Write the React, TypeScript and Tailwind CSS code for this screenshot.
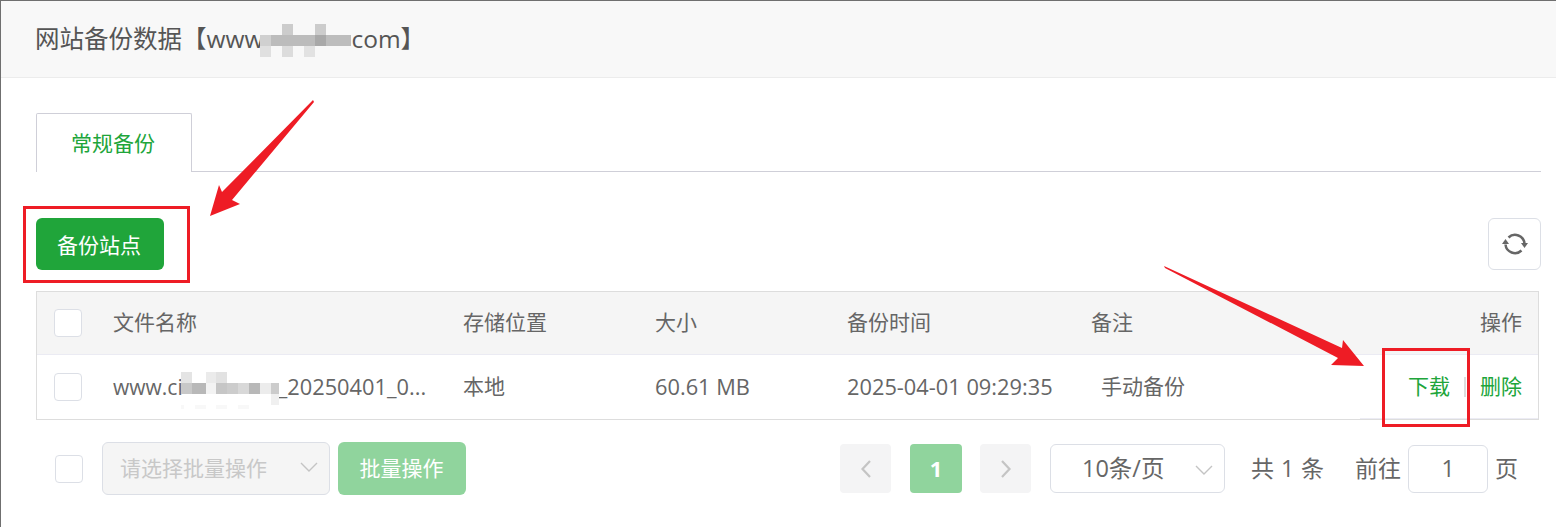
const font = { fontFamily: '"Open Sans","Noto Sans CJK SC",sans-serif' };

function Check({ className = "" }: { className?: string }) {
  return <span className={`block w-[28px] h-[28px] bg-white border border-[#dcdfe6] rounded-[4px] shrink-0 ${className}`} />;
}

function Mosaic({ cells, w, h, className = "" }: { cells: [number, number, number, number, string][]; w: number; h: number; className?: string }) {
  return (
    <svg width={w} height={h} viewBox={`0 0 ${w} ${h}`} className={`absolute ${className}`}>
      {cells.map(([x, y, cw, ch, c], i) => (
        <rect key={i} x={x} y={y} width={cw} height={ch} fill={c} />
      ))}
    </svg>
  );
}

function Chevron({ d = "M3 5l8 8 8-8", className = "" }: { d?: string; className?: string }) {
  return (
    <svg width="22" height="18" viewBox="0 0 22 18" fill="none" className={className}>
      <path d={d} stroke="currentColor" strokeWidth="1.4" />
    </svg>
  );
}

const grid = "grid grid-cols-[76px_350px_192px_192px_244px_1fr] items-center";

export default function App() {
  return (
    <div style={font} className="relative w-[1556px] h-[527px] overflow-hidden bg-white border-l border-t border-[#6f6f6f] text-[21px] text-[#666666]">
      <div className="h-[77px] bg-[#f8f8f8] border-b border-[#ececec] flex items-center pl-[34px] text-[24.5px] text-[#555555] relative">
        <span className="whitespace-nowrap leading-none flex items-center">
          网站备份数据【www<span className="w-[88px] inline-block" />com】
        </span>
        <Mosaic
          w={91}
          h={33}
          className="left-[259px] top-[23px]"
          cells={[
            [22, 0, 11, 11, "#cccccc"],
            [55, 0, 11, 11, "#cccccc"],
            [0, 11, 11, 11, "#d0d0d0"],
            [11, 11, 44, 11, "#bcbcbc"],
            [55, 11, 11, 11, "#a9a9a9"],
            [66, 11, 25, 11, "#bdbdbd"],
            [0, 22, 11, 11, "#e0e0e0"],
            [22, 22, 11, 11, "#dcdcdc"],
            [44, 22, 11, 11, "#e2e2e2"],
          ]}
        />
      </div>

      <div className="pl-[35px] pr-[15px] pt-[35px]">
        <div className="h-[59px] border-b border-[#cfcfd8]">
          <div className="w-[156px] h-[59px] bg-white border border-b-0 border-[#cfcfd8] rounded-t-[2px] text-[#20a53a] flex items-center justify-center pt-[2px] pr-[2px]">
            常规备份
          </div>
        </div>

        <div className="flex justify-between items-start mt-[46px]">
          <button className="w-[128px] h-[52px] bg-[#20a53a] text-white rounded-[6px] leading-none pt-[2px] pr-[2px]">备份站点</button>
          <button className="w-[53px] h-[52px] bg-white border border-[#dcdfe6] rounded-[6px] flex items-center justify-center text-[#666666]">
            <svg width="26" height="26" viewBox="0 0 26 26" fill="none">
              <path d="M6.500 6.500A9.500 9.500 0 0 1 22.500 12.500" stroke="currentColor" strokeWidth="2.500" />
              <path d="M19.500 19.500A9.500 9.500 0 0 1 3.500 13.500" stroke="currentColor" strokeWidth="2.500" />
              <path d="M19 12h7l-3.500 5z" fill="currentColor" />
              <path d="M0 13h7L3.500 8z" fill="currentColor" />
            </svg>
          </button>
        </div>

        <div className="relative mt-[21px] w-[1503px] border border-[#dddddd]">
          <div className={`${grid} h-[63px] bg-[#f5f5f5] border-b border-[#ebebf3]`}>
            <Check className="ml-[17px]" />
            <div>文件名称</div>
            <div>存储位置</div>
            <div>大小</div>
            <div>备份时间</div>
            <div className="flex justify-between pr-[16px]">
              <span>备注</span>
              <span>操作</span>
            </div>
          </div>
          <div className={`${grid} h-[64px] bg-white`}>
            <Check className="ml-[17px]" />
            <div className="relative whitespace-nowrap">
              www.ci<span className="inline-block w-[95px]" /><span className="text-[21.8px]">_20250401_0...</span>
              <Mosaic
                w={98}
                h={38}
                className="left-[68px] top-[1px]"
                cells={[
                  [0, 0, 11, 11, "#e4e4e4"],
                  [25, 0, 10, 11, "#ebebeb"],
                  [35, 0, 11, 11, "#e2e2e2"],
                  [0, 11, 11, 11, "#c8c8c8"],
                  [11, 11, 14, 11, "#b8b8b8"],
                  [25, 11, 10, 11, "#f3f3f3"],
                  [35, 11, 11, 11, "#c6c6c6"],
                  [46, 11, 11, 11, "#cccccc"],
                  [57, 11, 11, 11, "#d8d8d8"],
                  [68, 11, 11, 11, "#b8b8b8"],
                  [79, 11, 11, 11, "#ececec"],
                  [90, 11, 8, 11, "#cccccc"],
                  [90, 22, 8, 11, "#f0f0f0"],
                  [0, 33, 3, 4, "#f8f8f8"],
                  [14, 33, 11, 4, "#f8f8f8"],
                  [35, 33, 11, 4, "#f8f8f8"],
                  [57, 33, 11, 4, "#f8f8f8"],
                ]}
              />
            </div>
            <div>本地</div>
            <div className="whitespace-nowrap text-[21.8px]">60.61 MB</div>
            <div className="whitespace-nowrap text-[21.8px]">2025-04-01 09:29:35</div>
            <div className="flex justify-between items-center pr-[16px] pl-[10px]">
              <span>手动备份</span>
              <span className="flex items-center text-[#20a53a]">
                下载
                <span className="w-[2px] h-[20px] bg-[#dddddd] mx-[14px]" />
                删除
              </span>
            </div>
          </div>
          <div className="absolute right-0 bottom-0 w-[178px] h-[1px] bg-[#ececf4]" />
        </div>

        <div className="flex items-center mt-[22px] h-[53px]">
          <Check className="ml-[19px]" />
          <div className="ml-[19px] w-[228px] h-[53px] bg-[#f5f5f5] border border-[#dcdfe6] rounded-[6px] flex items-center justify-between pl-[17px] pr-[9px] text-[#c8c8c8] whitespace-nowrap">
            请选择批量操作
            <Chevron className="text-[#c4c4c4] -mt-[3px]" />
          </div>
          <button className="ml-[8px] w-[128px] h-[53px] bg-[#90d49d] text-white rounded-[6px] pt-[1px] pr-[1px]">批量操作</button>
          <button className="ml-[374px] w-[51px] h-[49px] bg-[#f4f4f5] rounded-[4px] flex items-center justify-center text-[#c4c4c4]">
            <svg width="12" height="18" viewBox="0 0 12 18" fill="none"><path d="M10 1 2.500 9l7.500 8" stroke="currentColor" strokeWidth="2.200" /></svg>
          </button>
          <div className="ml-[19px] w-[52px] h-[49px] bg-[#90d49d] text-white rounded-[4px] flex items-center justify-center font-bold text-[22px]">1</div>
          <button className="ml-[18px] w-[51px] h-[49px] bg-[#f4f4f5] rounded-[4px] flex items-center justify-center text-[#c4c4c4]">
            <svg width="12" height="18" viewBox="0 0 12 18" fill="none"><path d="m2 1 7.500 8L2 17" stroke="currentColor" strokeWidth="2.200" /></svg>
          </button>
          <div className="ml-[19px] w-[175px] h-[49px] bg-white border border-[#dcdfe6] rounded-[6px] flex items-center justify-between pl-[31px] pr-[9px] whitespace-nowrap text-[23.5px]">
            10条/页
            <Chevron className="text-[#c4c4c4] mt-[2px]" />
          </div>
          <span className="ml-[26px] whitespace-nowrap text-[23px] [word-spacing:1px]">共 1 条</span>
          <span className="ml-[31px] whitespace-nowrap text-[23px]">前往</span>
          <div className="ml-[7px] w-[80px] h-[48px] bg-white border border-[#dcdfe6] rounded-[6px] flex items-center justify-center text-[23px]">1</div>
          <span className="ml-[7px] text-[23px]">页</span>
        </div>
      </div>

      <svg width="1556" height="527" viewBox="0 0 1556 527" className="absolute left-[-1px] top-[-1px] pointer-events-none">
        <rect x="24.500" y="207.500" width="164" height="74" fill="none" stroke="#ee1c25" strokeWidth="3" />
        <rect x="1383.500" y="349.500" width="85" height="76" fill="none" stroke="#ee1c25" strokeWidth="3" />
        <path d="M313 100 222 192 219 185 210 216 240 204 232 200 314 102z" fill="#ee1c25" />
        <path d="M1164 266 1342 348 1343 340 1364 366 1331 365 1338 358 1165 268z" fill="#ee1c25" />
      </svg>
    </div>
  );
}
